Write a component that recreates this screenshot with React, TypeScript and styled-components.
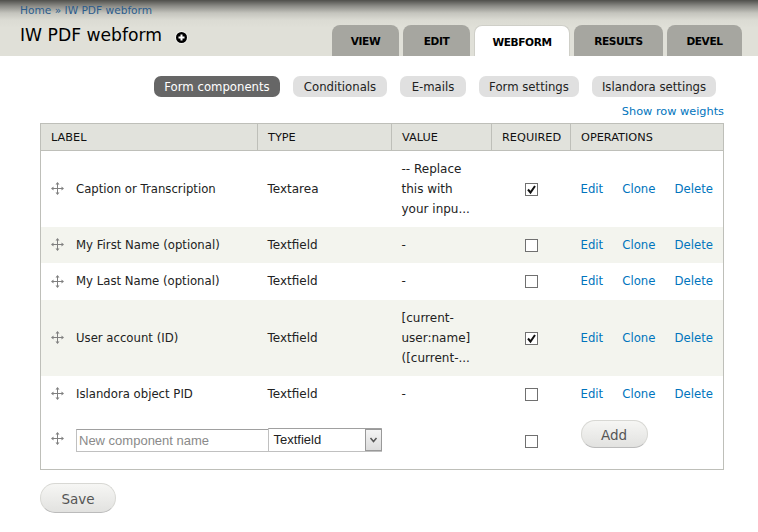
import React from 'react'
import styled, { createGlobalStyle } from 'styled-components'

const Global = createGlobalStyle`
  html, body { margin: 0; padding: 0; background: #fff; }
  body {
    width: 758px;
    height: 532px;
    overflow: hidden;
    font-family: "DejaVu Sans", sans-serif;
    font-size: 12px;
    color: #111;
  }
`

const Header = styled.header`
  height: 56px;
  box-sizing: border-box;
  padding: 0 16px 0 20px;
  background: linear-gradient(#4f4f4b 0, #8b8b86 6px, #c4c4bd 13px, #dbdbd3 20px, #e0e0d8 28px);
  display: flex;
  justify-content: space-between;
  align-items: flex-end;
`

const TitleBlock = styled.div`
  align-self: stretch;
  padding-top: 3px;
`

const Breadcrumb = styled.div`
  font-size: 10.6px;
  line-height: 15px;
  color: #2b5c8c;
`

const TitleRow = styled.div`
  display: flex;
  align-items: center;
  margin-top: 5px;
`

const Title = styled.h1`
  margin: 0;
  font-size: 17.2px;
  line-height: 24px;
  font-weight: 400;
  color: #000;
`

const Shortcut = styled.span`
  width: 13px;
  height: 13px;
  margin: 5px 0 0 13px;
  display: flex;
`

const Tabs = styled.nav`
  display: flex;
  gap: 4px;
`

const Tab = styled.div<{ $active?: boolean; $width: number }>`
  width: ${(p) => p.$width}px;
  height: 31px;
  box-sizing: border-box;
  border-radius: 8px 8px 0 0;
  background: ${(p) => (p.$active ? '#fff' : '#a6a6a0')};
  border: ${(p) => (p.$active ? '1px solid #cfcfc8' : 'none')};
  border-bottom: none;
  font-size: 10.6px;
  font-weight: 700;
  letter-spacing: -0.4px;
  line-height: 33px;
  text-align: center;
  color: #000;
`

const Content = styled.main`
  padding: 20px 34px 0 40px;
`

const SecondaryTabs = styled.nav`
  display: flex;
  justify-content: flex-end;
  gap: 13px;
  padding-right: 8px;
`

const Pill = styled.div<{ $active?: boolean; $width: number }>`
  width: ${(p) => p.$width}px;
  height: 21px;
  border-radius: 7px;
  background: ${(p) => (p.$active ? '#666' : '#e0e0e0')};
  color: ${(p) => (p.$active ? '#fff' : '#222')};
  font-size: 11.7px;
  line-height: 22px;
  text-align: center;
`

const WeightsLink = styled.a`
  display: block;
  margin-top: 7px;
  height: 19px;
  line-height: 16px;
  text-align: right;
  font-size: 11.3px;
  color: #0074bd;
`

const Table = styled.table`
  width: 683px;
  border-collapse: collapse;
  table-layout: fixed;
  border: 1px solid #bebfb9;
`

const HeadCell = styled.th<{ $width: number }>`
  width: ${(p) => p.$width}px;
  height: 27px;
  box-sizing: border-box;
  padding: 0 10px;
  background: #e1e2dc;
  border: 1px solid #bebfb9;
  font-size: 11.3px;
  font-weight: 400;
  text-align: left;
  color: #111;
`

const Row = styled.tr<{ $even?: boolean; $height: number }>`
  height: ${(p) => p.$height}px;
  background: ${(p) => (p.$even ? '#f3f4ee' : '#fff')};
`

const Cell = styled.td`
  padding: 0 10px;
  color: #222;
  vertical-align: middle;
`

const ValueText = styled.div`
  line-height: 20px;
`

const LabelWrap = styled.div`
  display: flex;
  align-items: center;
  gap: 12px;
  font-size: 11.7px;
  white-space: nowrap;
`

const NewLabelWrap = styled.div`
  display: flex;
  align-items: flex-start;
  gap: 12px;
  padding-left: 10px;
`

const Handle = styled.svg`
  width: 13px;
  height: 13px;
  flex: none;
`

const NewHandleSlot = styled.span`
  margin-top: 20px;
`

const Check = styled.span`
  display: block;
  width: 13px;
  height: 13px;
  margin: 1px auto 0;
  box-sizing: border-box;
  border: 1px solid #707070;
  background: #fff;
`

const CheckMark = styled.svg`
  display: block;
  width: 11px;
  height: 11px;
`

const NewCheckSlot = styled.div`
  margin-top: 23px;
`

const Ops = styled.div`
  display: flex;
  justify-content: space-between;
  font-size: 11.7px;
  color: #0074bd;
`

const InputCell = styled.td`
  padding: 0;
  vertical-align: top;
`

const NameInput = styled.div`
  flex: none;
  margin-top: 17px;
  width: 192px;
  height: 23px;
  box-sizing: border-box;
  border: 1px solid #c0c0c0;
  border-top-color: #a0a0a0;
  border-right: none;
  padding-left: 2px;
  font-family: "Liberation Sans", sans-serif;
  font-size: 13px;
  line-height: 21px;
  color: #8a8a8a;
  white-space: nowrap;
`

const Select = styled.div`
  margin: 16px 0 0 10px;
  width: 114px;
  height: 24px;
  box-sizing: border-box;
  border: 1px solid #c0c0c0;
  border-top-color: #a0a0a0;
  padding-left: 5px;
  display: flex;
  justify-content: space-between;
  font-family: "Liberation Sans", sans-serif;
  font-size: 13px;
  line-height: 22px;
  color: #222;
`

const SelectArrow = styled.span`
  width: 17px;
  margin: 0 -1px 0 0;
  box-sizing: border-box;
  border: 1px solid #999;
  background: linear-gradient(#f4f4f4, #dcdcdc);
  display: flex;
  align-items: center;
  justify-content: center;
`

const AddSlot = styled.div`
  margin: 8px 0 0 10px;
`

const RoundButton = styled.div<{ $width: number; $height: number }>`
  width: ${(p) => p.$width}px;
  height: ${(p) => p.$height}px;
  box-sizing: border-box;
  border: 1px solid #d8d8d4;
  border-bottom-color: #bbb;
  border-radius: 15px;
  background: linear-gradient(#f6f6f4, #e2e2e0);
  color: #555;
  font-size: 13.5px;
  text-align: center;
  line-height: ${(p) => p.$height}px;
`

const SaveWrap = styled.div`
  margin-top: 13px;
`

const MoveIcon = () => (
  <Handle viewBox="0 0 13 13">
    <path d="M6.5 1v11M1 6.5h11" stroke="#808080" strokeWidth="1" fill="none" />
    <path d="M6.5 0l2 2.5h-4zM6.5 13l2-2.5h-4zM0 6.5l2.5-2v4zM13 6.5l-2.5-2v4z" fill="#808080" />
  </Handle>
)

const tabs = [
  { name: 'VIEW', width: 67 },
  { name: 'EDIT', width: 67 },
  { name: 'WEBFORM', width: 96, active: true },
  { name: 'RESULTS', width: 89 },
  { name: 'DEVEL', width: 75 },
]

const pills = [
  { name: 'Form components', width: 126, active: true },
  { name: 'Conditionals', width: 94 },
  { name: 'E-mails', width: 66 },
  { name: 'Form settings', width: 100 },
  { name: 'Islandora settings', width: 124 },
]

const rows = [
  { label: 'Caption or Transcription', type: 'Textarea', value: ['-- Replace', 'this with', 'your inpu...'], required: true, height: 76 },
  { label: 'My First Name (optional)', type: 'Textfield', value: ['-'], height: 36 },
  { label: 'My Last Name (optional)', type: 'Textfield', value: ['-'], height: 37 },
  { label: 'User account (ID)', type: 'Textfield', value: ['[current-', 'user:name]', '([current-...'], required: true, height: 76 },
  { label: 'Islandora object PID', type: 'Textfield', value: ['-'], height: 36 },
]

const CheckBox = ({ checked }: { checked?: boolean }) => (
  <Check>
    {checked && (
      <CheckMark viewBox="0 0 11 11">
        <path d="M2 5.5l2.5 3L9 2" stroke="#111" strokeWidth="2" fill="none" />
      </CheckMark>
    )}
  </Check>
)

const App = () => (
  <>
    <Global />
    <Header>
      <TitleBlock>
        <Breadcrumb>Home » IW PDF webform</Breadcrumb>
        <TitleRow>
          <Title>IW PDF webform</Title>
          <Shortcut>
            <svg viewBox="0 0 13 13" width="13" height="13">
              <circle cx="6.5" cy="6.5" r="6.5" fill="#fff" opacity="0.6" />
              <circle cx="6.5" cy="6.5" r="5.5" fill="#000" />
              <path d="M6.5 3.5v6M3.5 6.5h6" stroke="#fff" strokeWidth="2" />
            </svg>
          </Shortcut>
        </TitleRow>
      </TitleBlock>
      <Tabs>
        {tabs.map((t) => (
          <Tab key={t.name} $width={t.width} $active={t.active}>{t.name}</Tab>
        ))}
      </Tabs>
    </Header>
    <Content>
      <SecondaryTabs>
        {pills.map((p) => (
          <Pill key={p.name} $width={p.width} $active={p.active}>{p.name}</Pill>
        ))}
      </SecondaryTabs>
      <WeightsLink>Show row weights</WeightsLink>
      <Table>
        <thead>
          <tr>
            <HeadCell $width={217}>LABEL</HeadCell>
            <HeadCell $width={134}>TYPE</HeadCell>
            <HeadCell $width={100}>VALUE</HeadCell>
            <HeadCell $width={79}>REQUIRED</HeadCell>
            <HeadCell $width={153}>OPERATIONS</HeadCell>
          </tr>
        </thead>
        <tbody>
          {rows.map((r, i) => (
            <Row key={r.label} $even={i % 2 === 1} $height={r.height}>
              <Cell>
                <LabelWrap><MoveIcon />{r.label}</LabelWrap>
              </Cell>
              <Cell>{r.type}</Cell>
              <Cell>
                {r.value.map((v) => <ValueText key={v}>{v}</ValueText>)}
              </Cell>
              <Cell><CheckBox checked={r.required} /></Cell>
              <Cell>
                <Ops><span>Edit</span><span>Clone</span><span>Delete</span></Ops>
              </Cell>
            </Row>
          ))}
          <Row $height={58}>
            <InputCell>
              <NewLabelWrap>
                <NewHandleSlot><MoveIcon /></NewHandleSlot>
                <NameInput>New component name</NameInput>
              </NewLabelWrap>
            </InputCell>
            <InputCell>
              <Select>
                Textfield
                <SelectArrow>
                  <svg width="9" height="6" viewBox="0 0 9 6">
                    <path d="M1.5 1l3 3.5 3-3.5" stroke="#555" strokeWidth="1.5" fill="none" />
                  </svg>
                </SelectArrow>
              </Select>
            </InputCell>
            <InputCell />
            <InputCell><NewCheckSlot><CheckBox /></NewCheckSlot></InputCell>
            <InputCell>
              <AddSlot>
                <RoundButton $width={67} $height={28}>Add</RoundButton>
              </AddSlot>
            </InputCell>
          </Row>
        </tbody>
      </Table>
      <SaveWrap>
        <RoundButton $width={76} $height={30}>Save</RoundButton>
      </SaveWrap>
    </Content>
  </>
)

export default App
